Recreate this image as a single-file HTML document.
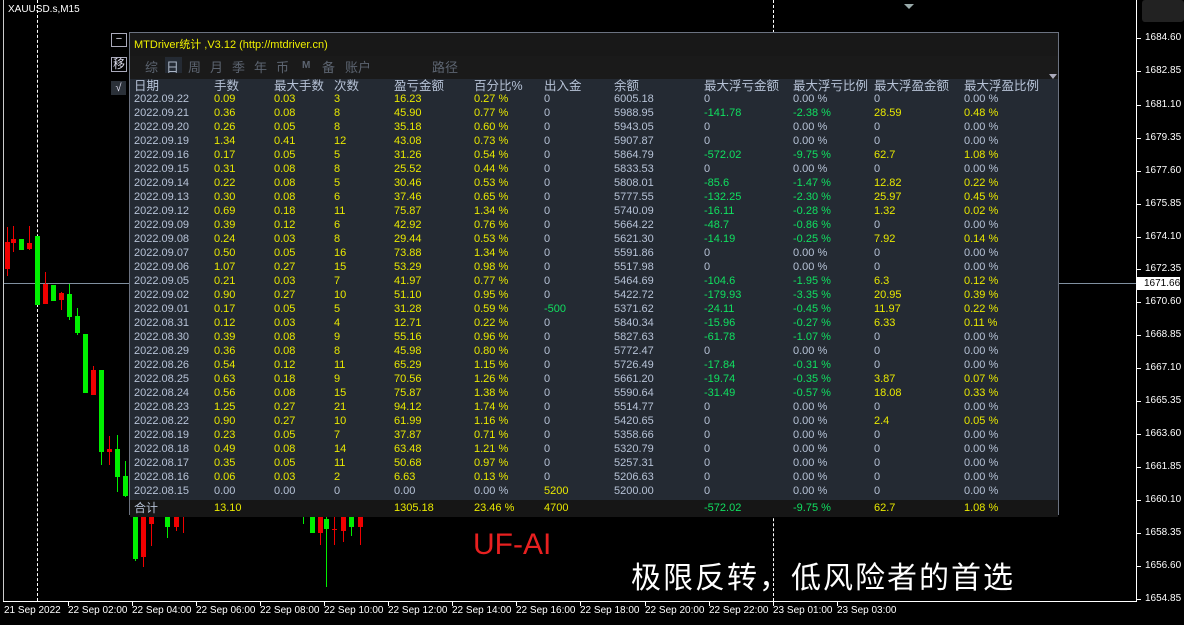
<!DOCTYPE html>
<html><head><meta charset="utf-8"><style>
*{margin:0;padding:0;box-sizing:border-box}
body{width:1184px;height:625px;background:#000;position:relative;overflow:hidden;font-family:"Liberation Sans","Noto Sans CJK SC",sans-serif}
.a{position:absolute}
.c{position:absolute;width:5px}
.w{position:absolute;width:1px}
.g{background:#00f000}.r{background:#f00000}
.ax{position:absolute;left:1145px;font-size:10px;color:#fff}
.tk{position:absolute;left:1137px;width:4px;height:1px;background:#fff}
.tl{position:absolute;top:605px;font-size:10px;color:#fff;white-space:nowrap}
.tt{position:absolute;top:602px;width:1px;height:4px;background:#fff}
#p{left:129px;top:32px;width:930px;height:483px;border:1px solid #6b7280;background:#242a33}
#t{position:absolute;left:0;top:46px;width:928px;font-size:11px;background:#242a33}
.rw{display:flex;height:14px;line-height:14px;white-space:nowrap;color:#b6c2d6}
.rw span{display:block;flex:none;overflow:visible}
.rw span:nth-child(1){width:84px;padding-left:4px}
.rw span:nth-child(2),.rw span:nth-child(3),.rw span:nth-child(4){width:60px}
.rw span:nth-child(5){width:80px}
.rw span:nth-child(6),.rw span:nth-child(7){width:70px}
.rw span:nth-child(8){width:90px}
.rw span:nth-child(9){width:89px}
.rw span:nth-child(10){width:81px}
.rw span:nth-child(11){width:90px}
.hd{font-size:12.5px;height:13px;line-height:14px}
.ft{background:#161616;height:17px;line-height:17px;margin-top:2px}
.y{color:#e8e800}.gr{color:#10e060}
.tb{position:absolute;top:24px;font-size:13px;color:#5c6470}
</style></head><body>
<div class="a" style="left:3px;top:0;width:1px;height:602px;background:#ccc"></div>
<div class="a" style="left:3px;top:601px;width:1134px;height:1px;background:#fff"></div>
<div class="a" style="left:1136px;top:0;width:1px;height:602px;background:#fff"></div>
<div class="a" style="left:4px;top:283px;width:1132px;height:1px;background:#8090a0"></div>
<div class="a" style="left:37px;top:0;height:601px;border-left:1px dashed #fff"></div>
<div class="a" style="left:773px;top:0;height:601px;border-left:1px dashed #fff"></div>
<div class="a" style="left:8px;top:4px;font-size:10px;color:#fff">XAUUSD.s,M15</div>
<div class="a" style="left:904px;top:4px;width:0;height:0;border-left:5px solid transparent;border-right:5px solid transparent;border-top:5px solid #9aa"></div>
<div class="a" style="left:1142px;top:0;width:42px;height:22px;background:#222;border-radius:3px"></div>
<!-- candles -->
<div class="w r" style="left:7px;top:227px;height:49px"></div><div class="c r" style="left:5px;top:242px;height:27px"></div>
<div class="w r" style="left:13px;top:226px;height:26px"></div><div class="c r" style="left:11px;top:239px;height:4px"></div>
<div class="c g" style="left:19px;top:239px;height:11px"></div>
<div class="w r" style="left:29px;top:226px;height:24px"></div><div class="c r" style="left:27px;top:243px;height:6px"></div>
<div class="c g" style="left:35px;top:236px;height:69px"></div>
<div class="w r" style="left:45px;top:272px;height:32px"></div><div class="c r" style="left:43px;top:284px;height:20px"></div>
<div class="c g" style="left:51px;top:285px;height:16px"></div>
<div class="w r" style="left:61px;top:292px;height:18px"></div><div class="c r" style="left:59px;top:293px;height:7px"></div>
<div class="w g" style="left:69px;top:284px;height:36px"></div><div class="c g" style="left:67px;top:294px;height:23px"></div>
<div class="w g" style="left:77px;top:308px;height:27px"></div><div class="c g" style="left:75px;top:316px;height:17px"></div>
<div class="c g" style="left:83px;top:334px;height:59px"></div>
<div class="w r" style="left:93px;top:366px;height:29px"></div><div class="c r" style="left:91px;top:370px;height:25px"></div>
<div class="w g" style="left:101px;top:370px;height:95px"></div><div class="c g" style="left:99px;top:370px;height:82px"></div>
<div class="w r" style="left:109px;top:436px;height:29px"></div><div class="c r" style="left:107px;top:449px;height:3px"></div>
<div class="w g" style="left:117px;top:435px;height:57px"></div><div class="c g" style="left:115px;top:449px;height:28px"></div>
<div class="w g" style="left:125px;top:461px;height:36px"></div><div class="c g" style="left:123px;top:476px;height:20px"></div>
<div class="w g" style="left:135px;top:514px;height:47px"></div><div class="c g" style="left:133px;top:514px;height:45px"></div>
<div class="w r" style="left:143px;top:517px;height:50px"></div><div class="c r" style="left:141px;top:517px;height:40px"></div>
<div class="w r" style="left:151px;top:514px;height:32px"></div><div class="c r" style="left:149px;top:514px;height:10px"></div>
<div class="w g" style="left:167px;top:514px;height:24px"></div><div class="c g" style="left:165px;top:514px;height:13px"></div>
<div class="w r" style="left:176px;top:514px;height:17px"></div><div class="c r" style="left:174px;top:515px;height:12px"></div>
<div class="w r" style="left:183px;top:514px;height:19px"></div><div class="c r" style="left:181px;top:514px;height:2px"></div>
<div class="w g" style="left:303px;top:514px;height:10px"></div><div class="c g" style="left:301px;top:514px;height:3px"></div>
<div class="c g" style="left:310px;top:515px;height:18px"></div>
<div class="w r" style="left:320px;top:514px;height:31px"></div><div class="c r" style="left:318px;top:517px;height:16px"></div>
<div class="w g" style="left:326px;top:514px;height:73px"></div><div class="c g" style="left:324px;top:519px;height:10px"></div>
<div class="w r" style="left:334px;top:514px;height:31px"></div><div class="c r" style="left:332px;top:529px;height:1px"></div>
<div class="w r" style="left:343px;top:514px;height:28px"></div><div class="c r" style="left:341px;top:514px;height:17px"></div>
<div class="w g" style="left:351px;top:514px;height:22px"></div><div class="c g" style="left:349px;top:514px;height:13px"></div>
<div class="w r" style="left:360px;top:514px;height:31px"></div><div class="c r" style="left:358px;top:514px;height:13px"></div>
<!-- axis -->
<div class="tk" style="top:38px"></div><div class="ax" style="top:32px">1684.60</div>
<div class="tk" style="top:71px"></div><div class="ax" style="top:65px">1682.85</div>
<div class="tk" style="top:105px"></div><div class="ax" style="top:99px">1681.10</div>
<div class="tk" style="top:138px"></div><div class="ax" style="top:132px">1679.35</div>
<div class="tk" style="top:171px"></div><div class="ax" style="top:165px">1677.60</div>
<div class="tk" style="top:204px"></div><div class="ax" style="top:198px">1675.85</div>
<div class="tk" style="top:237px"></div><div class="ax" style="top:231px">1674.10</div>
<div class="tk" style="top:269px"></div><div class="ax" style="top:263px">1672.35</div>
<div class="a" style="left:1137px;top:277px;width:43px;height:13px;background:#fff;color:#000;font-size:10px;padding-left:7px;line-height:13px">1671.66</div>
<div class="tk" style="top:302px"></div><div class="ax" style="top:296px">1670.60</div>
<div class="tk" style="top:335px"></div><div class="ax" style="top:329px">1668.85</div>
<div class="tk" style="top:368px"></div><div class="ax" style="top:362px">1667.10</div>
<div class="tk" style="top:401px"></div><div class="ax" style="top:395px">1665.35</div>
<div class="tk" style="top:434px"></div><div class="ax" style="top:428px">1663.60</div>
<div class="tk" style="top:467px"></div><div class="ax" style="top:461px">1661.85</div>
<div class="tk" style="top:500px"></div><div class="ax" style="top:494px">1660.10</div>
<div class="tk" style="top:533px"></div><div class="ax" style="top:527px">1658.35</div>
<div class="tk" style="top:566px"></div><div class="ax" style="top:560px">1656.60</div>
<div class="tk" style="top:599px"></div><div class="ax" style="top:593px">1654.85</div>
<div class="tl" style="left:4px">21 Sep 2022</div>
<div class="tt" style="left:68px"></div><div class="tl" style="left:68px">22 Sep 02:00</div>
<div class="tt" style="left:132px"></div><div class="tl" style="left:132px">22 Sep 04:00</div>
<div class="tt" style="left:196px"></div><div class="tl" style="left:196px">22 Sep 06:00</div>
<div class="tt" style="left:260px"></div><div class="tl" style="left:260px">22 Sep 08:00</div>
<div class="tt" style="left:324px"></div><div class="tl" style="left:324px">22 Sep 10:00</div>
<div class="tt" style="left:388px"></div><div class="tl" style="left:388px">22 Sep 12:00</div>
<div class="tt" style="left:452px"></div><div class="tl" style="left:452px">22 Sep 14:00</div>
<div class="tt" style="left:516px"></div><div class="tl" style="left:516px">22 Sep 16:00</div>
<div class="tt" style="left:580px"></div><div class="tl" style="left:580px">22 Sep 18:00</div>
<div class="tt" style="left:645px"></div><div class="tl" style="left:645px">22 Sep 20:00</div>
<div class="tt" style="left:709px"></div><div class="tl" style="left:709px">22 Sep 22:00</div>
<div class="tt" style="left:773px"></div><div class="tl" style="left:773px">23 Sep 01:00</div>
<div class="tt" style="left:837px"></div><div class="tl" style="left:837px">23 Sep 03:00</div>
<div class="a" style="left:473px;top:528px;font-size:30px;color:#e82020">UF-AI</div>
<div class="a" style="left:631px;top:553px;font-size:30px;color:#fff;letter-spacing:2px">极限反转，低风险者的首选</div>
<!-- side buttons -->
<div class="a" style="left:111px;top:33px;width:16px;height:14px;border:1px solid #aab;color:#dde;font-size:11px;line-height:11px;text-align:center">−</div>
<div class="a" style="left:111px;top:57px;width:16px;height:15px;border:1px solid #aab;color:#dde;font-size:12px;line-height:13px;text-align:center">移</div>
<div class="a" style="left:111px;top:81px;width:15px;height:14px;background:#2a3038;color:#dde;font-size:11px;line-height:14px;text-align:center">√</div>
<div class="a" id="p">
<div class="a" style="left:0;top:0;width:928px;height:23px;background:#181818"></div>
<div class="a" style="left:4px;top:3px;font-size:11px;color:#f0f000">MTDriver统计 ,V3.12 (http://mtdriver.cn)</div>
<div class="a" style="left:0;top:23px;width:928px;height:23px;background:#1a1a1a"></div>
<div class="a" style="left:35px;top:24px;width:17px;height:16px;background:#242a33"></div>
<span class="tb" style="left:15px">综</span><span class="tb" style="left:36px;color:#aab4c4">日</span><span class="tb" style="left:58px">周</span><span class="tb" style="left:80px">月</span><span class="tb" style="left:102px">季</span><span class="tb" style="left:124px">年</span><span class="tb" style="left:146px">币</span><span class="tb" style="left:172px;font-size:10px;font-weight:bold;top:27px">M</span><span class="tb" style="left:192px">备</span><span class="tb" style="left:215px">账户</span><span class="tb" style="left:302px">路径</span>
<div class="a" style="right:1px;top:41px;width:0;height:0;border-left:4px solid transparent;border-right:4px solid transparent;border-top:5px solid #aab"></div>
<div id="t">
<div class="rw hd"><span>日期</span><span>手数</span><span>最大手数</span><span>次数</span><span>盈亏金额</span><span>百分比%</span><span>出入金</span><span>余额</span><span>最大浮亏金额</span><span>最大浮亏比例</span><span>最大浮盈金额</span><span>最大浮盈比例</span></div>
<div class="rw"><span>2022.09.22</span><span class="y">0.09</span><span class="y">0.03</span><span class="y">3</span><span class="y">16.23</span><span class="y">0.27 %</span><span>0</span><span>6005.18</span><span>0</span><span>0.00 %</span><span>0</span><span>0.00 %</span></div>
<div class="rw"><span>2022.09.21</span><span class="y">0.36</span><span class="y">0.08</span><span class="y">8</span><span class="y">45.90</span><span class="y">0.77 %</span><span>0</span><span>5988.95</span><span class="gr">-141.78</span><span class="gr">-2.38 %</span><span class="y">28.59</span><span class="y">0.48 %</span></div>
<div class="rw"><span>2022.09.20</span><span class="y">0.26</span><span class="y">0.05</span><span class="y">8</span><span class="y">35.18</span><span class="y">0.60 %</span><span>0</span><span>5943.05</span><span>0</span><span>0.00 %</span><span>0</span><span>0.00 %</span></div>
<div class="rw"><span>2022.09.19</span><span class="y">1.34</span><span class="y">0.41</span><span class="y">12</span><span class="y">43.08</span><span class="y">0.73 %</span><span>0</span><span>5907.87</span><span>0</span><span>0.00 %</span><span>0</span><span>0.00 %</span></div>
<div class="rw"><span>2022.09.16</span><span class="y">0.17</span><span class="y">0.05</span><span class="y">5</span><span class="y">31.26</span><span class="y">0.54 %</span><span>0</span><span>5864.79</span><span class="gr">-572.02</span><span class="gr">-9.75 %</span><span class="y">62.7</span><span class="y">1.08 %</span></div>
<div class="rw"><span>2022.09.15</span><span class="y">0.31</span><span class="y">0.08</span><span class="y">8</span><span class="y">25.52</span><span class="y">0.44 %</span><span>0</span><span>5833.53</span><span>0</span><span>0.00 %</span><span>0</span><span>0.00 %</span></div>
<div class="rw"><span>2022.09.14</span><span class="y">0.22</span><span class="y">0.08</span><span class="y">5</span><span class="y">30.46</span><span class="y">0.53 %</span><span>0</span><span>5808.01</span><span class="gr">-85.6</span><span class="gr">-1.47 %</span><span class="y">12.82</span><span class="y">0.22 %</span></div>
<div class="rw"><span>2022.09.13</span><span class="y">0.30</span><span class="y">0.08</span><span class="y">6</span><span class="y">37.46</span><span class="y">0.65 %</span><span>0</span><span>5777.55</span><span class="gr">-132.25</span><span class="gr">-2.30 %</span><span class="y">25.97</span><span class="y">0.45 %</span></div>
<div class="rw"><span>2022.09.12</span><span class="y">0.69</span><span class="y">0.18</span><span class="y">11</span><span class="y">75.87</span><span class="y">1.34 %</span><span>0</span><span>5740.09</span><span class="gr">-16.11</span><span class="gr">-0.28 %</span><span class="y">1.32</span><span class="y">0.02 %</span></div>
<div class="rw"><span>2022.09.09</span><span class="y">0.39</span><span class="y">0.12</span><span class="y">6</span><span class="y">42.92</span><span class="y">0.76 %</span><span>0</span><span>5664.22</span><span class="gr">-48.7</span><span class="gr">-0.86 %</span><span>0</span><span>0.00 %</span></div>
<div class="rw"><span>2022.09.08</span><span class="y">0.24</span><span class="y">0.03</span><span class="y">8</span><span class="y">29.44</span><span class="y">0.53 %</span><span>0</span><span>5621.30</span><span class="gr">-14.19</span><span class="gr">-0.25 %</span><span class="y">7.92</span><span class="y">0.14 %</span></div>
<div class="rw"><span>2022.09.07</span><span class="y">0.50</span><span class="y">0.05</span><span class="y">16</span><span class="y">73.88</span><span class="y">1.34 %</span><span>0</span><span>5591.86</span><span>0</span><span>0.00 %</span><span>0</span><span>0.00 %</span></div>
<div class="rw"><span>2022.09.06</span><span class="y">1.07</span><span class="y">0.27</span><span class="y">15</span><span class="y">53.29</span><span class="y">0.98 %</span><span>0</span><span>5517.98</span><span>0</span><span>0.00 %</span><span>0</span><span>0.00 %</span></div>
<div class="rw"><span>2022.09.05</span><span class="y">0.21</span><span class="y">0.03</span><span class="y">7</span><span class="y">41.97</span><span class="y">0.77 %</span><span>0</span><span>5464.69</span><span class="gr">-104.6</span><span class="gr">-1.95 %</span><span class="y">6.3</span><span class="y">0.12 %</span></div>
<div class="rw"><span>2022.09.02</span><span class="y">0.90</span><span class="y">0.27</span><span class="y">10</span><span class="y">51.10</span><span class="y">0.95 %</span><span>0</span><span>5422.72</span><span class="gr">-179.93</span><span class="gr">-3.35 %</span><span class="y">20.95</span><span class="y">0.39 %</span></div>
<div class="rw"><span>2022.09.01</span><span class="y">0.17</span><span class="y">0.05</span><span class="y">5</span><span class="y">31.28</span><span class="y">0.59 %</span><span class="gr">-500</span><span>5371.62</span><span class="gr">-24.11</span><span class="gr">-0.45 %</span><span class="y">11.97</span><span class="y">0.22 %</span></div>
<div class="rw"><span>2022.08.31</span><span class="y">0.12</span><span class="y">0.03</span><span class="y">4</span><span class="y">12.71</span><span class="y">0.22 %</span><span>0</span><span>5840.34</span><span class="gr">-15.96</span><span class="gr">-0.27 %</span><span class="y">6.33</span><span class="y">0.11 %</span></div>
<div class="rw"><span>2022.08.30</span><span class="y">0.39</span><span class="y">0.08</span><span class="y">9</span><span class="y">55.16</span><span class="y">0.96 %</span><span>0</span><span>5827.63</span><span class="gr">-61.78</span><span class="gr">-1.07 %</span><span>0</span><span>0.00 %</span></div>
<div class="rw"><span>2022.08.29</span><span class="y">0.36</span><span class="y">0.08</span><span class="y">8</span><span class="y">45.98</span><span class="y">0.80 %</span><span>0</span><span>5772.47</span><span>0</span><span>0.00 %</span><span>0</span><span>0.00 %</span></div>
<div class="rw"><span>2022.08.26</span><span class="y">0.54</span><span class="y">0.12</span><span class="y">11</span><span class="y">65.29</span><span class="y">1.15 %</span><span>0</span><span>5726.49</span><span class="gr">-17.84</span><span class="gr">-0.31 %</span><span>0</span><span>0.00 %</span></div>
<div class="rw"><span>2022.08.25</span><span class="y">0.63</span><span class="y">0.18</span><span class="y">9</span><span class="y">70.56</span><span class="y">1.26 %</span><span>0</span><span>5661.20</span><span class="gr">-19.74</span><span class="gr">-0.35 %</span><span class="y">3.87</span><span class="y">0.07 %</span></div>
<div class="rw"><span>2022.08.24</span><span class="y">0.56</span><span class="y">0.08</span><span class="y">15</span><span class="y">75.87</span><span class="y">1.38 %</span><span>0</span><span>5590.64</span><span class="gr">-31.49</span><span class="gr">-0.57 %</span><span class="y">18.08</span><span class="y">0.33 %</span></div>
<div class="rw"><span>2022.08.23</span><span class="y">1.25</span><span class="y">0.27</span><span class="y">21</span><span class="y">94.12</span><span class="y">1.74 %</span><span>0</span><span>5514.77</span><span>0</span><span>0.00 %</span><span>0</span><span>0.00 %</span></div>
<div class="rw"><span>2022.08.22</span><span class="y">0.90</span><span class="y">0.27</span><span class="y">10</span><span class="y">61.99</span><span class="y">1.16 %</span><span>0</span><span>5420.65</span><span>0</span><span>0.00 %</span><span class="y">2.4</span><span class="y">0.05 %</span></div>
<div class="rw"><span>2022.08.19</span><span class="y">0.23</span><span class="y">0.05</span><span class="y">7</span><span class="y">37.87</span><span class="y">0.71 %</span><span>0</span><span>5358.66</span><span>0</span><span>0.00 %</span><span>0</span><span>0.00 %</span></div>
<div class="rw"><span>2022.08.18</span><span class="y">0.49</span><span class="y">0.08</span><span class="y">14</span><span class="y">63.48</span><span class="y">1.21 %</span><span>0</span><span>5320.79</span><span>0</span><span>0.00 %</span><span>0</span><span>0.00 %</span></div>
<div class="rw"><span>2022.08.17</span><span class="y">0.35</span><span class="y">0.05</span><span class="y">11</span><span class="y">50.68</span><span class="y">0.97 %</span><span>0</span><span>5257.31</span><span>0</span><span>0.00 %</span><span>0</span><span>0.00 %</span></div>
<div class="rw"><span>2022.08.16</span><span class="y">0.06</span><span class="y">0.03</span><span class="y">2</span><span class="y">6.63</span><span class="y">0.13 %</span><span>0</span><span>5206.63</span><span>0</span><span>0.00 %</span><span>0</span><span>0.00 %</span></div>
<div class="rw"><span>2022.08.15</span><span>0.00</span><span>0.00</span><span>0</span><span>0.00</span><span>0.00 %</span><span class="y">5200</span><span>5200.00</span><span>0</span><span>0.00 %</span><span>0</span><span>0.00 %</span></div>
<div class="rw ft"><span style="font-size:12px">合计</span><span class="y">13.10</span><span></span><span></span><span class="y">1305.18</span><span class="y">23.46 %</span><span class="y">4700</span><span></span><span class="gr">-572.02</span><span class="gr">-9.75 %</span><span class="y">62.7</span><span class="y">1.08 %</span></div>
</div>
</div>
</body></html>
